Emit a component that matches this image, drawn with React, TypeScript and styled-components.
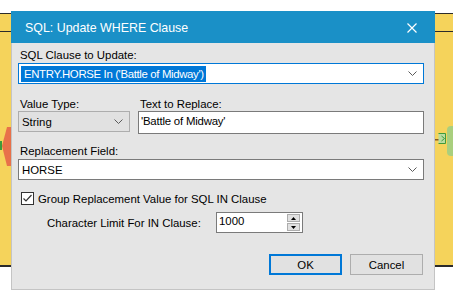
import styled, { createGlobalStyle } from "styled-components";

const Global = createGlobalStyle`
  html, body {
    margin: 0;
    padding: 0;
    background: #ffffff;
  }
  * {
    box-sizing: border-box;
  }
`;

function Chevron() {
  return (
    <svg width="9" height="5" viewBox="0 0 9 5">
      <polyline points="0.5,0.5 4.5,4.5 8.5,0.5" fill="none" stroke="#5a5a5a" strokeWidth="1" />
    </svg>
  );
}

function Backdrop() {
  return (
    <Decor width="453" height="297" viewBox="0 0 453 297">
      <polygon points="11,127 7,127 2,146 7,166 11,166" fill="#e8714a" />
      <rect x="0" y="141" width="2" height="9" fill="#3f9a3c" />
      <rect x="435" y="139" width="4" height="1.5" fill="#8a5a1e" />
      <path d="M438.5 133.5 h7 v10 h-7 M441.5 136 l3 2.5 l-3 2.5" fill="#b9dca0" stroke="#3f9a3c" strokeWidth="1" />
      <rect x="447" y="126" width="12" height="30" rx="4" fill="#a9cf7e" />
    </Decor>
  );
}

export default function App() {
  return (
    <>
      <Global />
      <Desktop>
        <TopStrip />
        <Workflow>
          <Lane />
          <Lane $grow />
        </Workflow>
        <Backdrop />
        <Dialog>
          <TitleBar>
            <Title>SQL: Update WHERE Clause</Title>
            <CloseButton>
              <svg width="10" height="10" viewBox="0 0 10 10">
                <path d="M0.5 0.5 L9.5 9.5 M9.5 0.5 L0.5 9.5" stroke="#ffffff" strokeWidth="1.2" />
              </svg>
            </CloseButton>
          </TitleBar>
          <Body>
            <Label>SQL Clause to Update:</Label>
            <Combo $focused>
              <Selected>ENTRY.HORSE In ('Battle of Midway')</Selected>
              <Chevron />
            </Combo>

            <Row>
              <Field $width={112}>
                <Label $tight>Value Type:</Label>
                <Combo $flat>
                  <ComboText>String</ComboText>
                  <Chevron />
                </Combo>
              </Field>
              <Field>
                <Label $tight>Text to Replace:</Label>
                <TextBox>'Battle of Midway'</TextBox>
              </Field>
            </Row>

            <Label $gap={10}>Replacement Field:</Label>
            <Combo>
              <ComboText>HORSE</ComboText>
              <Chevron />
            </Combo>

            <CheckRow>
              <CheckBox>
                <svg width="11" height="11" viewBox="0 0 11 11">
                  <polyline points="1.5,5.5 4,8 9.5,2" fill="none" stroke="#333333" strokeWidth="1.2" />
                </svg>
              </CheckBox>
              <span>Group Replacement Value for SQL IN Clause</span>
            </CheckRow>

            <LimitRow>
              <LimitLabel>Character Limit For IN Clause:</LimitLabel>
              <Spinner>
                <SpinValue>1000</SpinValue>
                <SpinButtons>
                  <SpinButton>
                    <svg width="5" height="3" viewBox="0 0 5 3">
                      <polygon points="0,3 5,3 2.5,0" fill="#000" />
                    </svg>
                  </SpinButton>
                  <SpinButton>
                    <svg width="5" height="3" viewBox="0 0 5 3">
                      <polygon points="0,0 5,0 2.5,3" fill="#000" />
                    </svg>
                  </SpinButton>
                </SpinButtons>
              </Spinner>
            </LimitRow>

            <Buttons>
              <Button $default>OK</Button>
              <Button>Cancel</Button>
            </Buttons>
          </Body>
        </Dialog>
      </Desktop>
    </>
  );
}

const Desktop = styled.div`
  position: relative;
  width: 453px;
  height: 297px;
  overflow: hidden;
  background: #ffffff;
  font-family: "Liberation Sans", Arial, sans-serif;
  font-size: 11.4px;
  color: #000000;
`;

const TopStrip = styled.div`
  height: 13px;
`;

const Workflow = styled.div`
  display: flex;
  flex-direction: column;
  height: 254px;
  background: #f5d35b;
  border-top: 1px solid #2b2b2b;
  border-bottom: 2px solid #2b2b2b;
`;

const Lane = styled.div<{ $grow?: boolean }>`
  height: 18px;
  border-bottom: ${(p) => (p.$grow ? "none" : "1px solid #2b2b2b")};
  flex: ${(p) => (p.$grow ? 1 : "none")};
`;

const Decor = styled.svg`
  position: absolute;
  left: 0;
  top: 0;
`;

const Dialog = styled.div`
  position: absolute;
  left: 11px;
  top: 11px;
  width: 424px;
  height: 279px;
  display: flex;
  flex-direction: column;
  background: #e5e5e5;
  border: 1px solid #c4c4c4;
  border-top: none;
`;

const TitleBar = styled.div`
  display: flex;
  align-items: center;
  justify-content: space-between;
  height: 32px;
  padding: 0 18px 0 14px;
  background: #1a90c7;
  margin: 0 -1px;
`;

const Title = styled.div`
  color: #ffffff;
  font-size: 12.4px;
  padding-top: 1px;
`;

const CloseButton = styled.div`
  display: flex;
  align-items: center;
  padding-top: 1px;
`;

const Body = styled.div`
  flex: 1;
  display: flex;
  flex-direction: column;
  padding: 5px 10px 0 6px;
`;

const Label = styled.div<{ $tight?: boolean; $gap?: number }>`
  line-height: ${(p) => (p.$tight ? 14 : 15)}px;
  padding-left: 2px;
  margin-top: ${(p) => p.$gap ?? 0}px;
  white-space: nowrap;
`;

const Combo = styled.div<{ $focused?: boolean; $flat?: boolean }>`
  display: flex;
  align-items: center;
  justify-content: space-between;
  height: 21px;
  padding: 0 6px 0 2px;
  background: ${(p) => (p.$flat ? "#e1e1e1" : "#ffffff")};
  border: 1px solid ${(p) => (p.$focused ? "#0078d7" : p.$flat ? "#adadad" : "#7a7a7a")};
`;

const Selected = styled.span`
  display: inline-block;
  background: #0078d7;
  color: #ffffff;
  line-height: 16px;
  letter-spacing: -0.35px;
  padding: 0 2px 0 3px;
`;

const ComboText = styled.span`
  padding-left: 1px;
`;

const Row = styled.div`
  display: flex;
  gap: 8px;
  margin-top: 13px;
`;

const Field = styled.div<{ $width?: number }>`
  display: flex;
  flex-direction: column;
  width: ${(p) => (p.$width ? `${p.$width}px` : "auto")};
  flex: ${(p) => (p.$width ? "none" : 1)};
`;

const TextBox = styled.div`
  height: 23px;
  padding: 3px 2px 0;
  letter-spacing: -0.2px;
  background: #ffffff;
  border: 1px solid #7a7a7a;
`;

const CheckRow = styled.div`
  display: flex;
  align-items: center;
  gap: 4px;
  margin-top: 12px;
  padding-left: 3px;
  height: 13px;
`;

const CheckBox = styled.div`
  display: flex;
  align-items: center;
  justify-content: center;
  width: 13px;
  height: 13px;
  background: #ffffff;
  border: 1px solid #333333;
`;

const LimitRow = styled.div`
  display: flex;
  align-items: center;
  margin-top: 7px;
  padding-left: 29px;
`;

const LimitLabel = styled.span`
  width: 169px;
  padding-top: 1px;
`;

const Spinner = styled.div`
  display: flex;
  justify-content: space-between;
  width: 87px;
  height: 21px;
  padding: 1px 2px 1px 2px;
  background: #ffffff;
  border: 1px solid #7a7a7a;
`;

const SpinValue = styled.span`
  line-height: 14px;
`;

const SpinButtons = styled.div`
  display: flex;
  flex-direction: column;
  gap: 1px;
`;

const SpinButton = styled.div`
  display: flex;
  align-items: center;
  justify-content: center;
  width: 13px;
  height: 8px;
  background: #e1e1e1;
  border: 1px solid #adadad;
`;

const Buttons = styled.div`
  display: flex;
  justify-content: flex-end;
  gap: 8px;
  margin-top: 21px;
  padding-right: 1px;
`;

const Button = styled.div<{ $default?: boolean }>`
  display: flex;
  align-items: center;
  justify-content: center;
  width: 73px;
  height: 21px;
  background: #e1e1e1;
  border: ${(p) => (p.$default ? "2px solid #0078d7" : "1px solid #adadad")};
`;
